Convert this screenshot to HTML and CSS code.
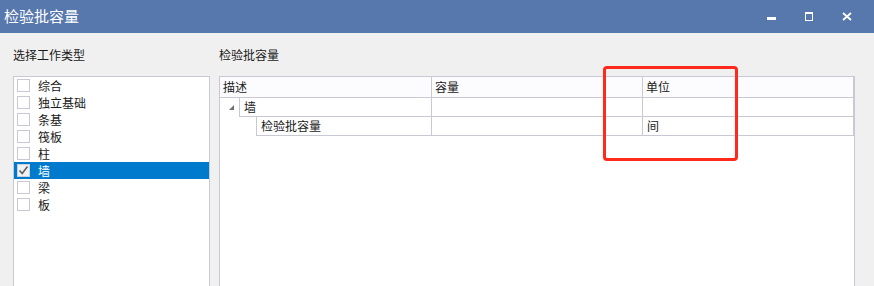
FILE: index.html
```html
<!DOCTYPE html>
<html lang="zh-CN">
<head>
    <meta charset="UTF-8">
    <title>检验批容量</title>
    <link rel="stylesheet" href="styles.css">
</head>
<body>
    <div class="window">
        <div class="titlebar">
            <span class="title">检验批容量</span>
            <div class="controls">
                <span class="ctl"><span class="min"></span></span>
                <span class="ctl"><span class="max"></span></span>
                <span class="ctl">
                    <svg width="10" height="9" viewBox="0 0 10 9"><path d="M1 1 L9 8 M9 1 L1 8" stroke="#fff" stroke-width="1.8"/></svg>
                </span>
            </div>
        </div>

        <div class="content">
            <div class="left">
                <div class="label">选择工作类型</div>
                <div class="list">
                    <div class="item"><span class="box"></span>综合</div>
                    <div class="item"><span class="box"></span>独立基础</div>
                    <div class="item"><span class="box"></span>条基</div>
                    <div class="item"><span class="box"></span>筏板</div>
                    <div class="item"><span class="box"></span>柱</div>
                    <div class="item selected">
                        <span class="box checked">
                            <svg width="11" height="11" viewBox="0 0 11 11"><path d="M1.5 5.5 L4.2 8.5 L9.5 1.5" fill="none" stroke="#606060" stroke-width="1.6"/></svg>
                        </span>墙
                    </div>
                    <div class="item"><span class="box"></span>梁</div>
                    <div class="item"><span class="box"></span>板</div>
                </div>
            </div>

            <div class="right">
                <div class="label">检验批容量</div>
                <div class="grid">
                    <div class="row header">
                        <div class="cell c1">描述</div>
                        <div class="cell c2">容量</div>
                        <div class="cell c3">单位</div>
                    </div>
                    <div class="row">
                        <div class="indent lvl1"><span class="arrow"></span></div>
                        <div class="cell c1 first">墙</div>
                        <div class="cell c2"></div>
                        <div class="cell c3"></div>
                    </div>
                    <div class="row">
                        <div class="indent lvl2"></div>
                        <div class="cell c1 first">检验批容量</div>
                        <div class="cell c2"></div>
                        <div class="cell c3">间</div>
                    </div>
                </div>
            </div>
        </div>

        <div class="mark"></div>
    </div>
</body>
</html>
```

FILE: styles.css
```css
body {
    margin: 0;
    background: #f0f0f0;
    font-family: "Noto Sans CJK SC", "Microsoft YaHei", sans-serif;
    font-size: 12px;
    color: #1a1a1a;
    overflow: hidden;
}

.window {
    position: relative;
    width: 874px;
    height: 286px;
    overflow: hidden;
}

.titlebar {
    height: 33px;
    background: #5678ac;
    display: flex;
    align-items: center;
    justify-content: space-between;
}

.title {
    color: #fff;
    font-size: 15px;
    padding-left: 4px;
    line-height: 20px;
    margin-top: -1px;
}

.controls {
    display: flex;
    height: 33px;
    padding-right: 8px;
}

.ctl {
    width: 38px;
    display: flex;
    align-items: center;
    justify-content: center;
}

.min {
    width: 9px;
    height: 3px;
    background: #fff;
    margin-top: 4px;
}

.max {
    width: 6px;
    height: 6px;
    border: 1px solid #fff;
    border-top-width: 2px;
    margin-top: -1px;
}

.content {
    display: flex;
    padding-left: 13px;
    gap: 9px;
}

.label {
    height: 43px;
    padding-top: 14px;
    line-height: 16px;
    box-sizing: border-box;
}

.left {
    width: 197px;
}

.list {
    background: #fff;
    border: 1px solid #c9c9d6;
    height: 220px;
}

.item {
    height: 17px;
    line-height: 17px;
    display: flex;
    align-items: center;
}

.item.selected {
    background: #007acc;
    color: #fff;
}

.box {
    width: 11px;
    height: 11px;
    border: 1px solid #c9c9d6;
    background: #fff;
    margin: 0 8px 0 3px;
    display: flex;
    align-items: center;
    justify-content: center;
}

.box.checked {
    background: #f2f2f2;
    border-color: #d0d0d8;
}

.right {
    width: 636px;
}

.grid {
    background: #fff;
    border: 1px solid #c9c9d6;
    height: 220px;
}

.row {
    display: flex;
    height: 19px;
}

.row.header {
    height: 21px;
    background: #fcfbfd;
}

.cell {
    box-sizing: border-box;
    border-bottom: 1px solid #c9c9d6;
    border-right: 1px solid #c9c9d6;
    padding-left: 4px;
    line-height: 18px;
}

.header .cell {
    line-height: 20px;
    padding-left: 3px;
}

.c1 { width: 212px; }
.c2 { width: 211px; }
.c3 { width: 211px; }

.indent {
    flex-shrink: 0;
    display: flex;
    align-items: center;
}

.lvl1 { width: 19px; }
.lvl2 { width: 36px; }
.lvl1 + .c1 { width: 193px; }
.lvl2 + .c1 { width: 176px; }

.cell.first {
    border-left: 1px solid #c9c9d6;
}

.arrow {
    width: 0;
    height: 0;
    margin-left: 9px;
    border-left: 5px solid transparent;
    border-bottom: 5px solid #707070;
}

.mark {
    position: absolute;
    left: 603px;
    top: 66px;
    width: 129px;
    height: 89px;
    border: 3px solid #ff2a1c;
    border-radius: 4px;
}
```
